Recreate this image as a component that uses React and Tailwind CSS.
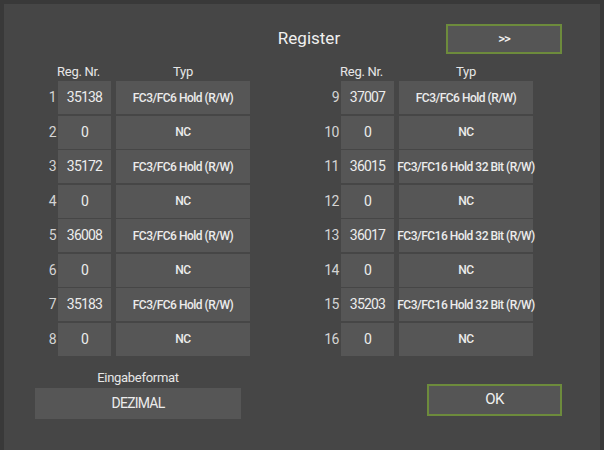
import React from 'react';

const left = [
  ['1', '35138', 'FC3/FC6 Hold (R/W)'],
  ['2', '0', 'NC'],
  ['3', '35172', 'FC3/FC6 Hold (R/W)'],
  ['4', '0', 'NC'],
  ['5', '36008', 'FC3/FC6 Hold (R/W)'],
  ['6', '0', 'NC'],
  ['7', '35183', 'FC3/FC6 Hold (R/W)'],
  ['8', '0', 'NC'],
];

const right = [
  ['9', '37007', 'FC3/FC6 Hold (R/W)'],
  ['10', '0', 'NC'],
  ['11', '36015', 'FC3/FC16 Hold 32 Bit (R/W)'],
  ['12', '0', 'NC'],
  ['13', '36017', 'FC3/FC16 Hold 32 Bit (R/W)'],
  ['14', '0', 'NC'],
  ['15', '35203', 'FC3/FC16 Hold 32 Bit (R/W)'],
  ['16', '0', 'NC'],
];

function RegTable({ rows, className }) {
  return (
    <div className={className}>
      <div className="flex h-[14px] text-[13px] leading-[14px] tracking-[-0.3px] text-[#e6e6e6]">
        <div className="w-[24px]" />
        <div className="w-[53px] text-center">Reg. Nr.</div>
        <div className="ml-[11px] w-[134px] text-center">Typ</div>
      </div>
      <div className="mt-[2px] flex flex-col gap-[1.5px]">
        {rows.map(([idx, reg, typ]) => (
          <div key={idx} className="flex h-[33px] items-center">
            <div className="w-[30px] pr-[2px] text-right text-[14px] tracking-[-0.5px] text-[#d4d4d4]">{idx}</div>
            <div className="flex h-full w-[53px] items-center justify-center bg-[#565656] text-[14px] tracking-[-0.8px] text-[#ececec]">
              {reg}
            </div>
            <div className="ml-[5px] flex h-full w-[134px] items-center justify-center whitespace-nowrap bg-[#565656] text-[12px] font-medium tracking-[-0.5px] text-[#ececec]">
              {typ}
            </div>
          </div>
        ))}
      </div>
    </div>
  );
}

export default function App() {
  return (
    <div
      className="h-[450px] w-[604px] bg-[#393939] px-[4px] pt-[4px]"
      style={{ fontFamily: 'Roboto, "Noto Sans", sans-serif' }}
    >
      <div className="h-full w-full bg-[#464646]">
        <div className="flex pt-[20px]">
          <div className="ml-[255px] flex h-[30px] w-[100px] items-center justify-center text-[17px] text-[#f0f0f0]">
            Register
          </div>
          <button className="ml-[87px] flex h-[30px] w-[116px] items-center justify-center border-2 border-[#6d8b3c] bg-[#555555] text-[13px] font-medium tracking-[-1px] text-[#f0f0f0]">
            &gt;&gt;
          </button>
        </div>

        <div className="mt-[11px] flex">
          <RegTable rows={left} className="ml-[24px]" />
          <RegTable rows={right} className="ml-[61px]" />
        </div>

        <div className="mt-[14px] flex items-start">
          <div className="ml-[31px] flex w-[206px] flex-col">
            <div className="h-[15px] text-center text-[13px] leading-[15px] tracking-[-0.3px] text-[#e6e6e6]">Eingabeformat</div>
            <button className="mt-[3px] flex h-[31px] w-full items-center justify-center bg-[#565656] text-[14px] tracking-[-0.8px] text-[#ececec]">
              DEZIMAL
            </button>
          </div>
          <button className="ml-[186px] mt-[14px] flex h-[32px] w-[135px] items-center justify-center border-2 border-[#6d8b3c] bg-[#555555] text-[15px] tracking-[-0.5px] text-[#f0f0f0]">
            OK
          </button>
        </div>
      </div>
    </div>
  );
}
